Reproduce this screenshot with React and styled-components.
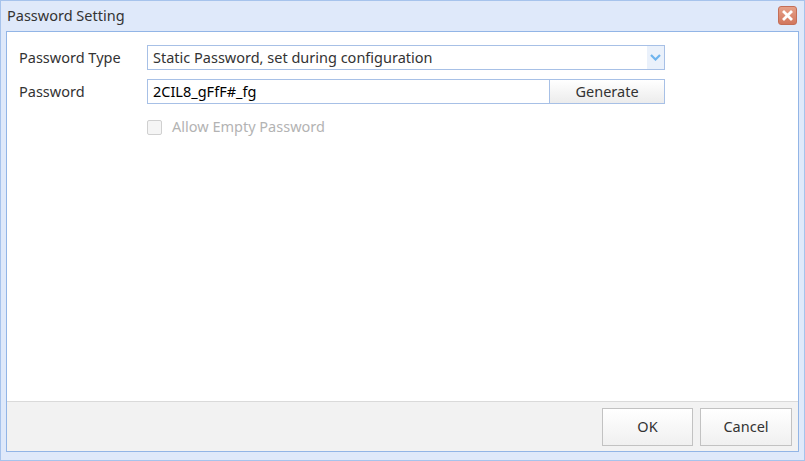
import React from "react";
import styled, { createGlobalStyle } from "styled-components";

const Global = createGlobalStyle`
  html, body { margin: 0; padding: 0; background: #fff; }
  body { font-family: "Noto Sans", "Open Sans", sans-serif; }
  * { box-sizing: border-box; }
`;

const Window = styled.div`
  width: 805px;
  height: 461px;
  border: 1px solid #a6c3ec;
  background: #dfe9fa;
  display: flex;
  flex-direction: column;
  padding: 0 5px 8px 5px;
`;

const TitleBar = styled.div`
  height: 30px;
  display: flex;
  align-items: center;
  justify-content: space-between;
  padding: 0 1px;
`;

const Title = styled.div`
  font-size: 14.5px;
  color: #333;
  margin-top: -2px;
`;

const CloseButton = styled.button`
  width: 19px;
  height: 19px;
  padding: 0;
  border: 1px solid #c46e57;
  border-radius: 3px;
  background: linear-gradient(#e6a189, #d2775e);
  display: flex;
  align-items: center;
  justify-content: center;
  margin-right: 1px;
  margin-bottom: 2px;
`;

const Panel = styled.div`
  flex: 1;
  border: 1px solid #92b5e6;
  display: flex;
  flex-direction: column;
  background: #fff;
`;

const Content = styled.div`
  flex: 1;
  padding: 13px 12px 0 12px;
`;

const Form = styled.div`
  display: grid;
  grid-template-columns: 128px 518px;
  grid-auto-rows: 25px;
  row-gap: 9px;
`;

const Label = styled.div`
  font-size: 14.5px;
  color: #333;
  display: flex;
  align-items: center;
  padding-bottom: 2px;
`;

const Field = styled.div`
  border: 1px solid #a7c0e6;
  display: flex;
  align-items: stretch;
  background: #fff;
`;

const FieldText = styled.div`
  flex: 1;
  font-size: 14.5px;
  color: ${(p) => p.$color || "#333"};
  display: flex;
  align-items: center;
  padding: 0 0 2px 5px;
`;

const ArrowBox = styled.div`
  width: 17px;
  background: #eaf1fb;
  display: flex;
  align-items: center;
  justify-content: center;
`;

const GenerateButton = styled.div`
  width: 115px;
  border-left: 1px solid #a7c0e6;
  background: linear-gradient(#ffffff, #ececec);
  font-size: 14.5px;
  color: #333;
  display: flex;
  align-items: center;
  justify-content: center;
  padding-bottom: 2px;
`;

const CheckRow = styled.div`
  grid-column: 2;
  display: flex;
  align-items: center;
  gap: 10px;
  margin-top: 3px;
`;

const Box = styled.div`
  width: 15px;
  height: 15px;
  border: 1px solid #d0d0d0;
  border-radius: 2px;
  background: #f5f5f5;
`;

const CheckLabel = styled.span`
  font-size: 14.5px;
  color: #b3b3b3;
  margin-top: -2px;
`;

const Footer = styled.div`
  height: 50px;
  border-top: 1px solid #dadada;
  background: #f2f2f2;
  display: flex;
  justify-content: flex-end;
  align-items: flex-start;
  gap: 7px;
  padding: 6px 6px 0 0;
`;

const DialogButton = styled.button`
  width: ${(p) => p.$w}px;
  height: 38px;
  border: 1px solid #c2c2c2;
  background: linear-gradient(#ffffff, #f0f0f0);
  font-family: inherit;
  font-size: 14.5px;
  color: #333;
  padding: 0 0 2px 0;
`;

export default function App() {
  return (
    <>
      <Global />
      <Window>
        <TitleBar>
          <Title>Password Setting</Title>
          <CloseButton aria-label="close">
            <svg width="11" height="11" viewBox="0 0 11 11">
              <path d="M2 2 L9 9 M9 2 L2 9" stroke="#fff" strokeWidth="2.8" strokeLinecap="square" />
            </svg>
          </CloseButton>
        </TitleBar>
        <Panel>
          <Content>
            <Form>
              <Label>Password Type</Label>
              <Field>
                <FieldText>Static Password, set during configuration</FieldText>
                <ArrowBox>
                  <svg width="11" height="7" viewBox="0 0 11 7">
                    <path d="M1 1 L5.5 5.5 L10 1" fill="none" stroke="#6fb4ee" strokeWidth="2.2" />
                  </svg>
                </ArrowBox>
              </Field>
              <Label>Password</Label>
              <Field>
                <FieldText $color="#000">2CIL8_gFfF#_fg</FieldText>
                <GenerateButton>Generate</GenerateButton>
              </Field>
              <CheckRow>
                <Box />
                <CheckLabel>Allow Empty Password</CheckLabel>
              </CheckRow>
            </Form>
          </Content>
          <Footer>
            <DialogButton $w={91}>OK</DialogButton>
            <DialogButton $w={92}>Cancel</DialogButton>
          </Footer>
        </Panel>
      </Window>
    </>
  );
}
